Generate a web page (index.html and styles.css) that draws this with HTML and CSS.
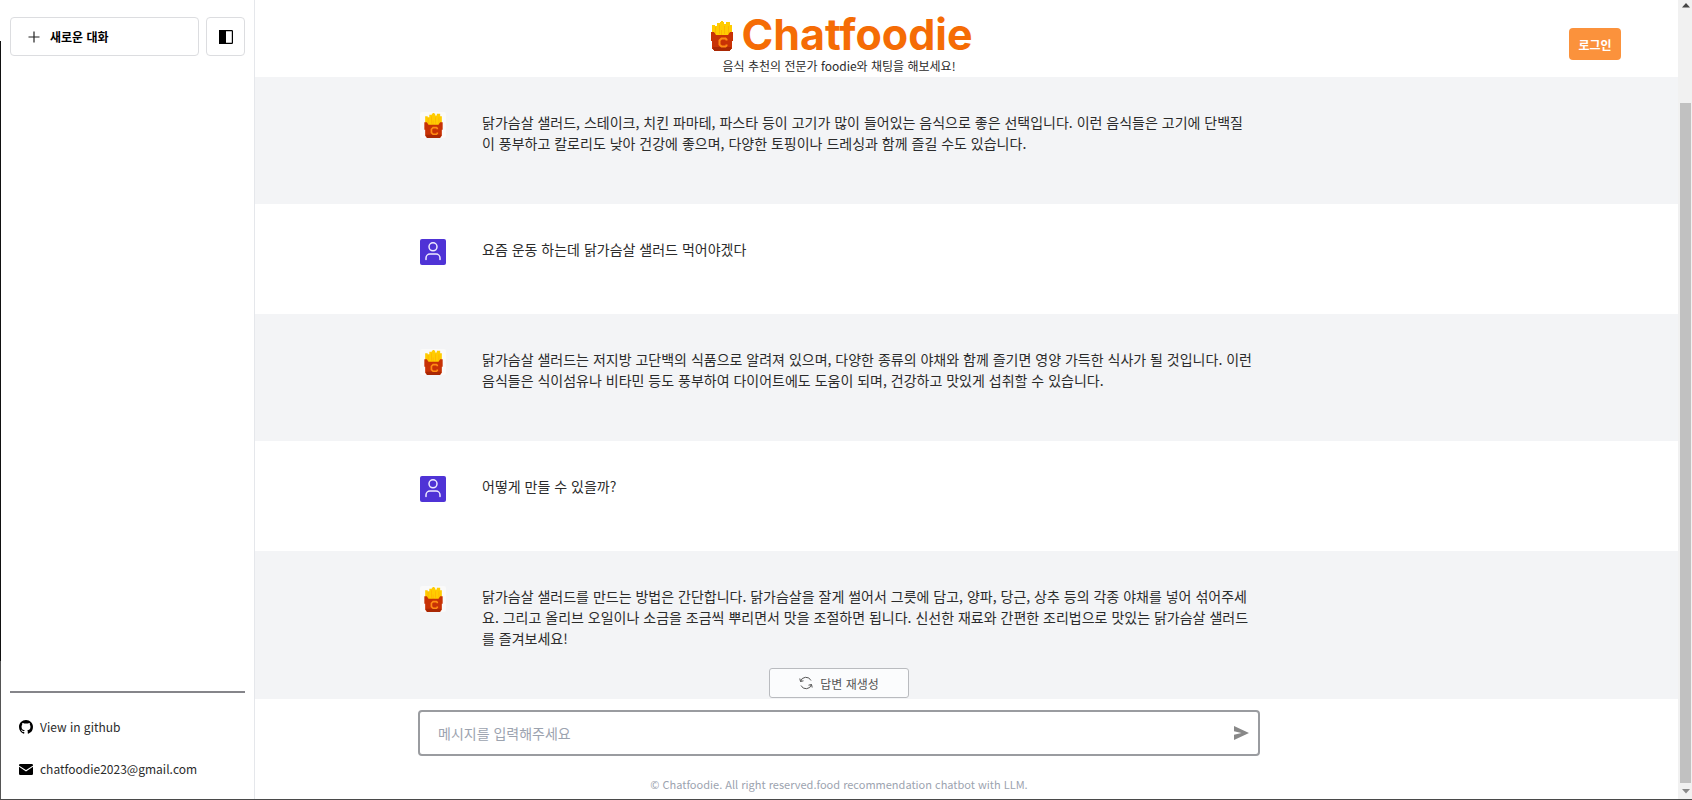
FILE: index.html
```html
<!DOCTYPE html>
<html lang="ko">
<head>
<meta charset="utf-8">
<title>Chatfoodie</title>
<link rel="stylesheet" href="styles.css">
</head>
<body>
<svg class="defs" aria-hidden="true">
  <symbol id="fries" viewBox="0 0 22 30">
    <path fill="#fc0" d="M1 4h3v1h2V2h3V1h1V0h2v1h1v2h2V1h4v3h2v11H1z"/>
    <path fill="#ffb400" d="M4 6h1v7H4zM8 4h1v9H8zM13 5h1v8h-1zM17 5h1v8h-1zM10 9h1v5h-1z"/>
    <path fill="#c83205" d="M0 11h3l2 3h12l2-3h3v9h-1v8h-1v1h-1v1H3v-1H2v-1H1v-8H0z"/>
    <path fill="#a92804" d="M2 26h18v2h-1v2H3v-2H2z"/>
    <path fill="none" stroke="#ff8c14" stroke-width="2" d="M15.500 19.500v-1l-1-1h-4l-2 2v4l2 2h4l1-1v-1"/>
  </symbol>
  <symbol id="person" viewBox="0 0 26 26">
    <g fill="none" stroke="#efebff" stroke-width="1.500" stroke-linecap="round"><circle cx="13" cy="7.800" r="4"/><path d="M6 20.500v-1.500a4 4 0 0 1 4-4h6a4 4 0 0 1 4 4v1.500"/></g>
  </symbol>
</svg>
<div class="window">
  <div class="app">
    <aside class="sidebar">
      <div class="edge"></div>
      <div class="sidebar-top">
        <button class="btn new-chat" type="button">
          <svg width="12" height="12" viewBox="0 0 12 12" aria-hidden="true"><path d="M6 .5v11M.5 6h11" stroke="#222" stroke-width="1.200"/></svg>
          새로운 대화
        </button>
        <button class="btn toggle" type="button" aria-label="사이드바 닫기">
          <svg width="14" height="14" viewBox="0 0 14 14" aria-hidden="true"><rect x=".6" y=".6" width="12.800" height="12.800" rx=".6" fill="#fff" stroke="#000" stroke-width="1.200"/><path d="M0 0h7v14H0z"/></svg>
        </button>
      </div>
      <nav class="links">
        <a href="#github">
          <svg width="14" height="14" viewBox="0 0 16 16" aria-hidden="true"><path d="M8 0C3.580 0 0 3.580 0 8c0 3.540 2.290 6.530 5.470 7.590.4.070.55-.17.55-.38 0-.19-.01-.82-.01-1.490-2.010.37-2.530-.49-2.690-.94-.09-.23-.48-.94-.82-1.130-.28-.15-.68-.52-.01-.53.63-.01 1.080.58 1.230.82.72 1.210 1.870.87 2.330.66.070-.52.280-.87.510-1.070-1.780-.2-3.640-.89-3.640-3.950 0-.87.310-1.590.820-2.150-.08-.2-.36-1.020.080-2.120 0 0 .670-.21 2.200.820.640-.18 1.320-.27 2-.27s1.360.090 2 .27c1.530-1.040 2.200-.82 2.200-.82.440 1.100.160 1.920.080 2.120.510.560.820 1.270.820 2.150 0 3.070-1.870 3.750-3.650 3.950.290.250.540.730.540 1.480 0 1.070-.01 1.930-.01 2.200 0 .210.150.460.550.380A8.010 8.010 0 0 0 16 8c0-4.420-3.580-8-8-8z"/></svg>
          View in github
        </a>
        <a href="mailto:chatfoodie2023@gmail.com">
          <svg width="14" height="14" viewBox="0 0 14 14" aria-hidden="true"><rect y="2" width="14" height="11" rx="1.200"/><path d="M0 4.200l7 4.600 7-4.600" fill="none" stroke="#fff" stroke-width="1.100"/></svg>
          chatfoodie2023@gmail.com
        </a>
      </nav>
    </aside>

    <main class="main">
      <header class="header">
        <div></div>
        <div class="brand">
          <h1><svg width="22" height="30" aria-hidden="true"><use href="#fries"/></svg>Chatfoodie</h1>
          <p>음식 추천의 전문가 foodie와 채팅을 해보세요!</p>
        </div>
        <button class="login" type="button">로그인</button>
      </header>

      <section class="chat">
        <div class="messages">
          <article class="message bot">
            <div class="inner">
              <span class="avatar"><svg width="19" height="25"><use href="#fries"/></svg></span>
              <p>닭가슴살 샐러드, 스테이크, 치킨 파마테, 파스타 등이 고기가 많이 들어있는 음식으로 좋은 선택입니다. 이런 음식들은 고기에 단백질<br>이 풍부하고 칼로리도 낮아 건강에 좋으며, 다양한 토핑이나 드레싱과 함께 즐길 수도 있습니다.</p>
            </div>
          </article>
          <article class="message user">
            <div class="inner">
              <span class="avatar"><svg width="26" height="26"><use href="#person"/></svg></span>
              <p>요즘 운동 하는데 닭가슴살 샐러드 먹어야겠다</p>
            </div>
          </article>
          <article class="message bot">
            <div class="inner">
              <span class="avatar"><svg width="19" height="25"><use href="#fries"/></svg></span>
              <p>닭가슴살 샐러드는 저지방 고단백의 식품으로 알려져 있으며, 다양한 종류의 야채와 함께 즐기면 영양 가득한 식사가 될 것입니다. 이런 음식들은 식이섬유나 비타민 등도 풍부하여 다이어트에도 도움이 되며, 건강하고 맛있게 섭취할 수 있습니다.</p>
            </div>
          </article>
          <article class="message user">
            <div class="inner">
              <span class="avatar"><svg width="26" height="26"><use href="#person"/></svg></span>
              <p>어떻게 만들 수 있을까?</p>
            </div>
          </article>
          <article class="message bot">
            <div class="inner">
              <span class="avatar"><svg width="19" height="25"><use href="#fries"/></svg></span>
              <p>닭가슴살 샐러드를 만드는 방법은 간단합니다. 닭가슴살을 잘게 썰어서 그릇에 담고, 양파, 당근, 상추 등의 각종 야채를 넣어 섞어주세요. 그리고 올리브 오일이나 소금을 조금씩 뿌리면서 맛을 조절하면 됩니다. 신선한 재료와 간편한 조리법으로 맛있는 닭가슴살 샐러드를 즐겨보세요!</p>
            </div>
          </article>
        </div>
        <button class="regenerate" type="button">
          <svg width="14" height="14" viewBox="0 0 14 14" fill="none" stroke="#555" stroke-width="1" aria-hidden="true"><path d="M1.500 5.500A5.600 5.600 0 0 1 12 4.500M12.500 8.500A5.600 5.600 0 0 1 2 9.500M.8 2.500l.7 3 3-.7M13.200 11.500l-.7-3-3 .7"/></svg>
          답변 재생성
        </button>
      </section>

      <footer class="footer">
        <form class="composer">
          <input type="text" aria-label="메시지" placeholder="메시지를 입력해주세요">
          <button type="button" aria-label="보내기">
            <svg width="15" height="14" viewBox="0 0 15 14" aria-hidden="true"><path fill="#888" d="M0 0l15 7L0 14V8.700L7.500 7 0 5.300z"/></svg>
          </button>
        </form>
        <p>© Chatfoodie. All right reserved.food recommendation chatbot with LLM.</p>
      </footer>
    </main>
  </div>
  <div class="scrollbar" aria-hidden="true">
    <svg width="8" height="5" viewBox="0 0 8 5"><path fill="#444" d="M4 0l4 4.500H0z"/></svg>
    <div class="thumb"></div>
    <svg width="8" height="5" viewBox="0 0 8 5"><path fill="#888" d="M4 4.500L0 0h8z"/></svg>
  </div>
</div>
</body>
</html>
```

FILE: styles.css
```css
* { box-sizing: border-box; }
body, h1, p { margin: 0; }
body, button, input { font-family: "Noto Sans CJK KR", sans-serif; }
body { color: #2b2b2b; font-size: 14px; line-height: 21px; background: #fff; }
button { cursor: pointer; padding: 0; }
svg { display: block; flex: none; }
a { color: inherit; text-decoration: none; }
.defs { display: none; }

.window { display: flex; height: 100vh; border-bottom: 1px solid #4a4a4a; overflow: hidden; }
.app { flex: 1; min-width: 0; display: grid; grid-template: 100% / 100%; }

/* The sidebar shares the grid cell with the main column, which stays centred on the whole page. */
.sidebar { grid-area: 1 / 1; z-index: 2; width: 255px; padding: 17px 9px 11px 10px; display: flex; flex-direction: column; background: #fff; border-right: 1px solid #e5e7eb; position: relative; }
.edge { position: absolute; left: 0; top: 41px; bottom: 0; width: 1px; background: linear-gradient(#111 620px, #555 620px); }
.sidebar-top { display: flex; gap: 7px; }
.btn { height: 39px; display: flex; align-items: center; background: #fff; border: 1px solid #dcdde0; border-radius: 4px; color: #000; }
.new-chat { flex: 1; gap: 10px; padding-left: 17px; font-size: 12px; font-weight: 600; }
.toggle { width: 39px; justify-content: center; }
.links { margin-top: auto; padding: 23px 0 9px 9px; border-top: 2px solid #85858a; display: flex; flex-direction: column; gap: 21px; font-size: 12px; }
.links a { display: flex; align-items: center; gap: 7px; }

.main { grid-area: 1 / 1; display: flex; flex-direction: column; min-height: 0; }
.header { height: 77px; padding: 0 57px; display: grid; grid-template-columns: 1fr auto 1fr; align-items: center; }
.brand { text-align: center; padding-top: 8px; }
.brand h1 { display: flex; align-items: center; justify-content: center; gap: 8px; padding-left: 6px; font: 700 43px/46px Inter, sans-serif; color: #f56c05; }
.brand h1 svg { margin-top: 4px; }
.brand p { font-size: 12px; line-height: 18px; }
.login { justify-self: end; width: 52px; height: 32px; margin-top: 11px; border: 0; border-radius: 4px; background: #fb923c; color: #fff; font-size: 12px; font-weight: 700; }

.chat { flex: 1; min-height: 0; position: relative; }
.messages { height: 100%; overflow: hidden; }
.message { padding: 35px 0 49px; }
.bot { padding-bottom: 50px; background: #f3f4f6; }
.inner { max-width: 838px; margin: 0 auto; display: flex; gap: 36px; }
.inner p { flex: 1; }
.avatar { flex: none; width: 26px; height: 26px; border-radius: 2px; display: flex; align-items: center; justify-content: center; background: #fafafa; }
.user .avatar { background: #4f33d6; }
.regenerate { position: absolute; bottom: 1px; left: 50%; margin-left: -70px; width: 140px; height: 30px; display: flex; align-items: center; justify-content: center; gap: 7px; border: 1px solid #b9bbbf; border-radius: 3px; background: #fbfcfd; color: #555; font-size: 12px; }

.footer { height: 100px; padding-top: 11px; text-align: center; }
.composer { max-width: 842px; height: 46px; margin: 0 auto 19px; display: flex; align-items: center; border: 2px solid #9a9ca0; border-radius: 4px; padding: 0 9px 0 18px; }
.composer input { flex: 1; border: 0; outline: 0; padding: 0; background: none; font-size: 14px; }
.composer input::placeholder { color: #9ca3af; }
.composer button { border: 0; background: none; }
.footer p { font-size: 11px; line-height: 18px; color: #9ca3af; }

.scrollbar { width: 14px; padding: 3px 1px 5px 2px; background: #f1f1f1; display: flex; flex-direction: column; align-items: center; }
.thumb { flex: 1; width: 100%; margin: 95px 0 6px; background: #c1c1c1; }
```
